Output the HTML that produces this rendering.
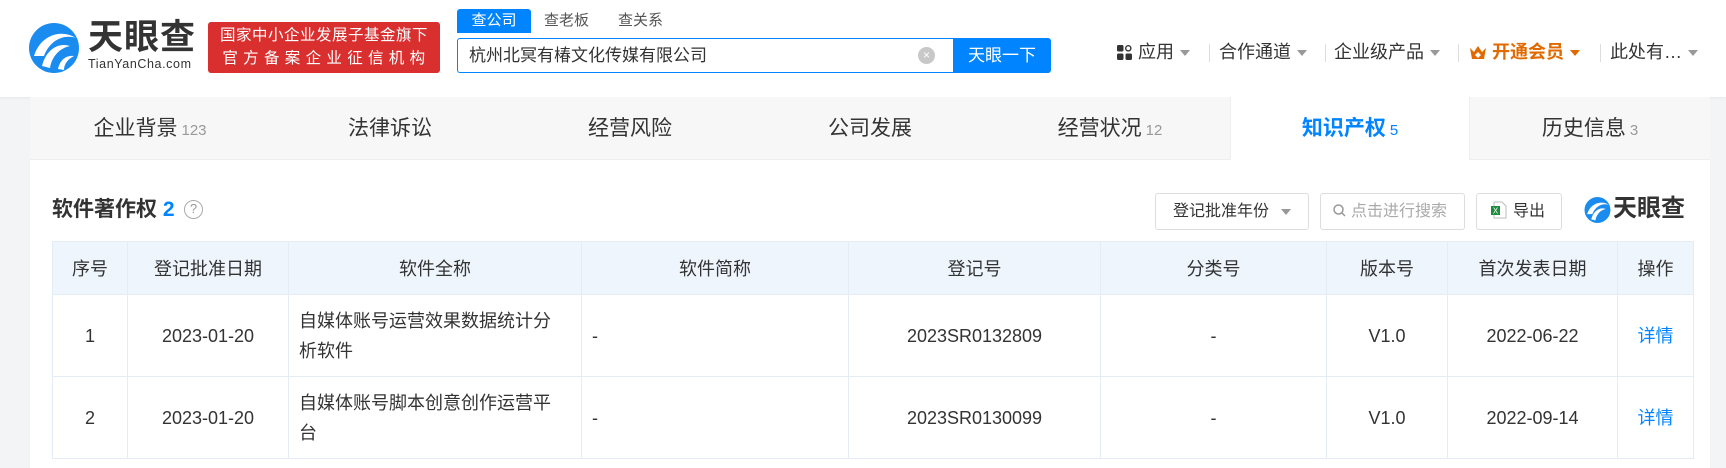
<!DOCTYPE html>
<html><head><meta charset="utf-8">
<style>
*{box-sizing:border-box;margin:0;padding:0}
body{width:1726px;height:468px;overflow:hidden;background:#f3f4f6;font-family:"Liberation Sans","Noto Sans CJK SC",sans-serif;color:#333;position:relative}
.abs{position:absolute}
.hdr{left:0;top:0;width:1726px;height:97px;background:#fff;box-shadow:0 1px 3px rgba(0,0,0,.06)}
.badge{left:208px;top:22px;width:232px;height:51px;background:#d92f2f;border-radius:3px;color:#fff;font-size:15.5px;line-height:23px;text-align:center;padding-top:2px;letter-spacing:.5px}
.stab{top:9px;height:24px;font-size:15px;line-height:24px;color:#555}
.sbox{left:457px;top:38px;width:496px;height:35px;border:1px solid #0084ff;border-right:none;border-radius:3px 0 0 3px;background:#fff;font-size:17px;line-height:33px;padding-left:11px;color:#333}
.btn{left:953px;top:38px;width:98px;height:35px;background:#0084ff;color:#fff;font-size:17px;line-height:35px;text-align:center;border-radius:0 3px 3px 0}
.nav{top:40px;font-size:18px;line-height:24px;color:#333}
.tri{display:inline-block;width:0;height:0;border-left:5px solid transparent;border-right:5px solid transparent;border-top:6px solid #999;vertical-align:middle;margin-left:6px}
.sep{top:44px;width:1px;height:18px;background:#ddd}
.tabs{left:30px;top:97px;width:1680px;height:63px;background:#f7f7f7;border-bottom:1px solid #eee}
.tab{top:0;height:63px;width:240px;text-align:center;font-size:21px;line-height:63px;color:#333}
.tab small{font-size:15px;color:#999;margin-left:4px}
.card{left:30px;top:160px;width:1680px;height:308px;background:#fff}
table{border-collapse:collapse;position:absolute;left:52px;top:241px;width:1641px;font-size:18px;table-layout:fixed}
td,th{border:1px solid #e4ecf5;text-align:center;font-weight:normal;color:#333}
th{background:#eef5fd;height:53px;font-size:18px}
td{height:82px;line-height:30px}
td.l{text-align:left;padding:0 28px 0 10px}
.tb{top:193px;height:37px;border:1px solid #ddd;border-radius:3px;background:#fff;font-size:16px;line-height:35px;color:#333}
</style></head><body>
<div class="abs hdr"></div>
<svg class="abs" style="left:28px;top:22px" width="54" height="52" viewBox="0 0 54 52">
<circle cx="26" cy="26" r="25" fill="#1a8cf0"/>
<path d="M6 34 C12 14 32 6 48 16 C36 12 22 18 16 34 Z" fill="#fff"/>
<path d="M14 44 C18 28 30 20 42 24 C32 26 24 34 22 46 Z" fill="#fff"/>
<path d="M30 47 C32 38 38 33 46 34 C40 37 36 42 36 48 Z" fill="#fff"/>
</svg>
<div class="abs" style="left:88px;top:18px;font-size:35px;font-weight:bold;color:#333;letter-spacing:1px;line-height:40px">天眼查</div>
<div class="abs" style="left:88px;top:57px;font-size:12.5px;color:#333;letter-spacing:.6px">TianYanCha.com</div>
<div class="abs badge">国家中小企业发展子基金旗下<br>官 方 备 案 企 业 征 信 机 构</div>
<div class="abs stab" style="left:457px;width:74px;background:#0084ff;color:#fff;text-align:center;border-radius:3px 3px 0 0">查公司</div>
<div class="abs stab" style="left:544px">查老板</div>
<div class="abs stab" style="left:618px">查关系</div>
<div class="abs sbox">杭州北冥有椿文化传媒有限公司</div>
<div class="abs" style="left:918px;top:47px;width:17px;height:17px;border-radius:50%;background:#c8c8c8;color:#fff;font-size:12px;line-height:17px;text-align:center">×</div>
<div class="abs btn">天眼一下</div>
<svg class="abs" style="left:1117px;top:45px" width="15" height="15" viewBox="0 0 15 15"><rect x="0" y="0" width="6.5" height="6.5" rx="1.5" fill="#333"/><circle cx="11.3" cy="3.3" r="2.6" fill="none" stroke="#333" stroke-width="1.4"/><rect x="0" y="8.5" width="6.5" height="6.5" rx="1.5" fill="#333"/><rect x="8.5" y="8.5" width="6.5" height="6.5" rx="1.5" fill="#333"/></svg>
<div class="abs nav" style="left:1138px">应用<span class="tri"></span></div>
<div class="abs sep" style="left:1209px"></div>
<div class="abs nav" style="left:1219px">合作通道<span class="tri"></span></div>
<div class="abs sep" style="left:1325px"></div>
<div class="abs nav" style="left:1334px">企业级产品<span class="tri"></span></div>
<div class="abs sep" style="left:1458px"></div>
<svg class="abs" style="left:1469px;top:45px" width="18" height="15" viewBox="0 0 18 15"><path d="M1 3 L5 7 L9 1 L13 7 L17 3 L15 14 L3 14 Z" fill="#e06a00"/><path d="M6 10 L9 7 L12 10 L9 13Z" fill="#fff"/></svg>
<div class="abs nav" style="left:1492px;color:#e06a00;font-weight:bold">开通会员<span class="tri" style="border-top-color:#e06a00"></span></div>
<div class="abs sep" style="left:1600px"></div>
<div class="abs nav" style="left:1610px">此处有…<span class="tri"></span></div>

<div class="abs tabs">
<div class="abs tab" style="left:0">企业背景<small>123</small></div>
<div class="abs tab" style="left:240px">法律诉讼</div>
<div class="abs tab" style="left:480px">经营风险</div>
<div class="abs tab" style="left:720px">公司发展</div>
<div class="abs tab" style="left:960px">经营状况<small>12</small></div>
<div class="abs tab" style="left:1200px;background:#fff;color:#0084ff;font-weight:bold;border-left:1px solid #eee;border-right:1px solid #eee;height:64px">知识产权<small style="color:#0084ff;font-weight:normal">5</small></div>
<div class="abs tab" style="left:1440px">历史信息<small>3</small></div>
</div>
<div class="abs card"></div>
<div class="abs" style="left:52px;top:196px;font-size:21px;font-weight:bold;color:#333;line-height:28px">软件著作权 <span style="color:#0084ff">2</span></div>
<div class="abs" style="left:184px;top:200px;width:19px;height:19px;border:1.5px solid #aaa;border-radius:50%;color:#999;font-size:13px;line-height:16px;text-align:center">?</div>
<div class="abs tb" style="left:1155px;width:154px;padding-left:17px">登记批准年份<span class="tri" style="margin-left:12px"></span></div>
<div class="abs tb" style="left:1320px;width:145px;padding-left:12px;color:#aaa"><svg width="13" height="13" viewBox="0 0 13 13" style="vertical-align:-1px;margin-right:5px"><circle cx="5.5" cy="5.5" r="4.5" fill="none" stroke="#999" stroke-width="1.5"/><path d="M9 9 L12 12" stroke="#999" stroke-width="1.5"/></svg>点击进行搜索</div>
<div class="abs tb" style="left:1476px;width:86px;padding-left:14px"><svg width="16" height="18" viewBox="0 0 16 18" style="vertical-align:-3px;margin-right:6px"><path d="M3 1 H11 L15 5 V17 H3 Z" fill="#fff" stroke="#bbb"/><rect x="0" y="5" width="9" height="9" fill="#1d8c3e"/><text x="4.5" y="12.5" font-size="8" fill="#fff" text-anchor="middle" font-family="Liberation Sans">X</text></svg>导出</div>
<svg class="abs" style="left:1584px;top:196px" width="28" height="28" viewBox="0 0 54 52"><circle cx="26" cy="26" r="25" fill="#1a8cf0"/><path d="M6 34 C12 14 32 6 48 16 C36 12 22 18 16 34 Z" fill="#fff"/><path d="M14 44 C18 28 30 20 42 24 C32 26 24 34 22 46 Z" fill="#fff"/></svg>
<div class="abs" style="left:1613px;top:193px;font-size:24px;font-weight:bold;color:#333;line-height:32px">天眼查</div>

<table>
<colgroup><col style="width:75px"><col style="width:161px"><col style="width:293px"><col style="width:267px"><col style="width:252px"><col style="width:226px"><col style="width:121px"><col style="width:170px"><col style="width:76px"></colgroup>
<tr><th>序号</th><th>登记批准日期</th><th>软件全称</th><th>软件简称</th><th>登记号</th><th>分类号</th><th>版本号</th><th>首次发表日期</th><th>操作</th></tr>
<tr><td>1</td><td>2023-01-20</td><td class="l">自媒体账号运营效果数据统计分析软件</td><td class="l">-</td><td>2023SR0132809</td><td>-</td><td>V1.0</td><td>2022-06-22</td><td style="color:#0084ff">详情</td></tr>
<tr><td>2</td><td>2023-01-20</td><td class="l">自媒体账号脚本创意创作运营平台</td><td class="l">-</td><td>2023SR0130099</td><td>-</td><td>V1.0</td><td>2022-09-14</td><td style="color:#0084ff">详情</td></tr>
</table>
</body></html>
